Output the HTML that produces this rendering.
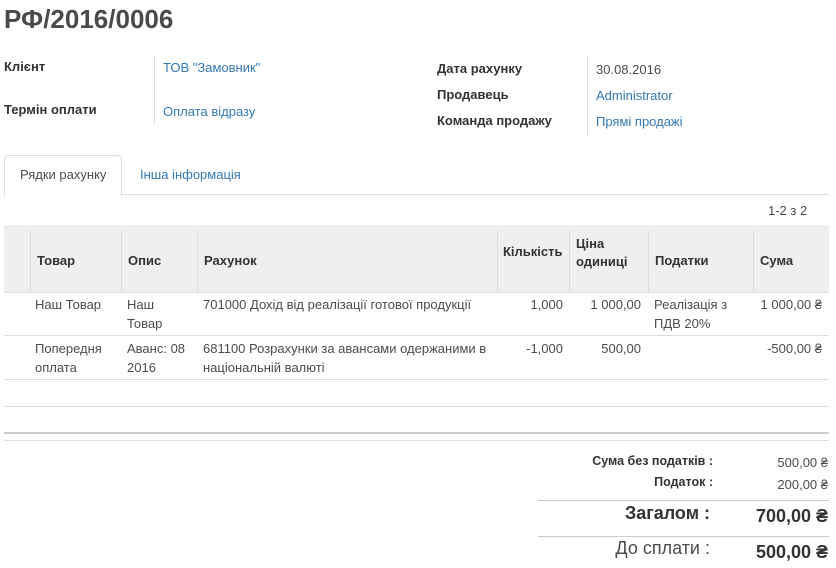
<html><head><style>
body{margin:0;width:836px;height:568px;background:#fff;font-family:"Liberation Sans",sans-serif;font-size:13px;color:#4c4c4c;position:relative;overflow:hidden}
.a{position:absolute;white-space:nowrap}
.b{font-weight:bold;color:#333}
.l{color:#337ab7}
.hl{position:absolute;height:1px;background:#ddd}
.vl{position:absolute;width:1px;background:#ddd}
</style></head><body>
<div class="a b" style="left:4px;top:4px;font-size:26px;color:#4a4a4a">РФ/2016/0006</div>
<div class="a b" style="left:4px;top:59px">Клієнт</div>
<div class="a b" style="left:4px;top:102px">Термін оплати</div>
<div class="vl" style="left:154px;top:55px;height:70px"></div>
<div class="a l" style="left:163px;top:60px">ТОВ "Замовник"</div>
<div class="a l" style="left:163px;top:104px">Оплата відразу</div>
<div class="a b" style="left:437px;top:61px">Дата рахунку</div>
<div class="a b" style="left:437px;top:87px">Продавець</div>
<div class="a b" style="left:437px;top:113px">Команда продажу</div>
<div class="vl" style="left:587px;top:57px;height:78px"></div>
<div class="a" style="left:596px;top:62px">30.08.2016</div>
<div class="a l" style="left:596px;top:88px">Administrator</div>
<div class="a l" style="left:596px;top:114px">Прямі продажі</div>
<div class="hl" style="left:4px;top:194px;width:825px"></div>
<div class="a" style="left:4px;top:155px;width:116px;height:39px;border:1px solid #ddd;border-bottom:1px solid #fff;border-radius:4px 4px 0 0;background:#fff"></div>
<div class="a" style="left:20px;top:167px">Рядки рахунку</div>
<div class="a l" style="left:140px;top:167px">Інша інформація</div>
<div class="a" style="left:768px;top:203px">1-2 з 2</div>
<div class="a" style="left:4px;top:225px;width:825px;height:67px;background:#eef0ee;border-bottom:1px solid #ddd"></div>
<div class="vl" style="left:30px;top:231px;height:61px"></div>
<div class="vl" style="left:121px;top:231px;height:61px"></div>
<div class="vl" style="left:197px;top:231px;height:61px"></div>
<div class="vl" style="left:497px;top:231px;height:61px"></div>
<div class="vl" style="left:569px;top:231px;height:61px"></div>
<div class="vl" style="left:648px;top:231px;height:61px"></div>
<div class="vl" style="left:753px;top:231px;height:61px"></div>
<div class="a b" style="left:37px;top:253px">Товар</div>
<div class="a b" style="left:128px;top:253px">Опис</div>
<div class="a b" style="left:204px;top:253px">Рахунок</div>
<div class="a b" style="left:503px;top:244px">Кількість</div>
<div class="a b" style="left:576px;top:235px;line-height:18px">Ціна<br>одиниці</div>
<div class="a b" style="left:655px;top:253px">Податки</div>
<div class="a b" style="left:760px;top:253px">Сума</div>
<div style="position:absolute;left:0;top:295px;line-height:19px">
<div class="a" style="left:35px">Наш Товар</div>
<div class="a" style="left:127px">Наш<br>Товар</div>
<div class="a" style="left:203px">701000 Дохід від реалізації готової продукції</div>
<div class="a" style="left:500px;width:63px;text-align:right">1,000</div>
<div class="a" style="left:570px;width:71px;text-align:right">1 000,00</div>
<div class="a" style="left:654px">Реалізація з<br>ПДВ 20%</div>
<div class="a" style="left:754px;width:68px;text-align:right">1 000,00 ₴</div>
</div>
<div class="hl" style="left:4px;top:335px;width:825px"></div>
<div style="position:absolute;left:0;top:339px;line-height:19px">
<div class="a" style="left:35px">Попередня<br>оплата</div>
<div class="a" style="left:127px">Аванс: 08<br>2016</div>
<div class="a" style="left:203px">681100 Розрахунки за авансами одержаними в<br>національній валюті</div>
<div class="a" style="left:500px;width:63px;text-align:right">-1,000</div>
<div class="a" style="left:570px;width:71px;text-align:right">500,00</div>
<div class="a" style="left:754px;width:68px;text-align:right">-500,00 ₴</div>
</div>
<div class="hl" style="left:4px;top:379px;width:825px"></div>
<div class="hl" style="left:4px;top:406px;width:825px"></div>
<div class="hl" style="left:4px;top:432px;width:825px;height:2px;background:#ccc"></div>
<div class="hl" style="left:4px;top:440px;width:825px"></div>
<div class="a b" style="left:480px;top:454px;width:233px;text-align:right;font-size:12.5px">Сума без податків :</div>
<div class="a" style="left:740px;top:455px;width:88px;text-align:right">500,00 ₴</div>
<div class="a b" style="left:480px;top:475px;width:233px;text-align:right;font-size:12.5px">Податок :</div>
<div class="a" style="left:740px;top:477px;width:88px;text-align:right">200,00 ₴</div>
<div class="hl" style="left:538px;top:500px;width:291px;background:#ccc"></div>
<div class="a b" style="left:480px;top:503px;width:230px;text-align:right;font-size:18px">Загалом :</div>
<div class="a b" style="left:720px;top:506px;width:108px;text-align:right;font-size:18px">700,00 ₴</div>
<div class="hl" style="left:538px;top:536px;width:291px;background:#ccc"></div>
<div class="a" style="left:480px;top:538px;width:230px;text-align:right;font-size:18px">До сплати :</div>
<div class="a b" style="left:720px;top:542px;width:108px;text-align:right;font-size:18px">500,00 ₴</div>
</body></html>
